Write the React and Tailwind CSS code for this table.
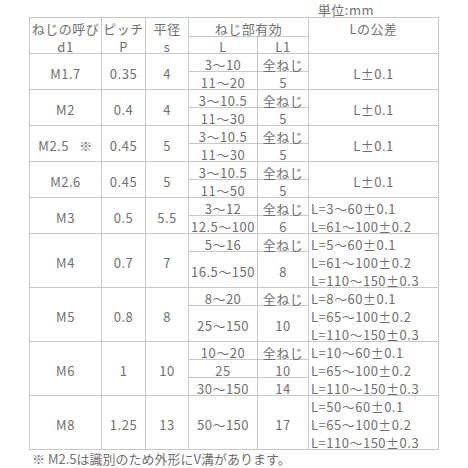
import React from "react";

const font = { fontFamily: '"Noto Sans CJK JP", "Liberation Sans", sans-serif' };

// 全セルの配置（グリッド上の位置はクラスで直書き）
const cells = [
  // ヘッダー
  { c: "col-start-1 row-start-1 row-span-2 flex-col", t: ["ねじの呼び", "d1"] },
  { c: "col-start-2 row-start-1 row-span-2 flex-col", t: ["ピッチ", "P"] },
  { c: "col-start-3 row-start-1 row-span-2 flex-col", t: ["平径", "s"] },
  { c: "col-start-4 col-span-2 row-start-1", t: "ねじ部有効" },
  { c: "col-start-4 row-start-2", t: "L" },
  { c: "col-start-5 row-start-2", t: "L1" },
  { c: "col-start-6 row-start-1 row-span-2 flex-col", t: ["Lの公差", "\u00a0"] },

  // M1.7
  { c: "col-start-1 row-start-3 row-span-2", t: "M1.7" },
  { c: "col-start-2 row-start-3 row-span-2", t: "0.35" },
  { c: "col-start-3 row-start-3 row-span-2", t: "4" },
  { c: "col-start-4 row-start-3", t: "3～10" },
  { c: "col-start-5 row-start-3", t: "全ねじ" },
  { c: "col-start-4 row-start-4", t: "11～20" },
  { c: "col-start-5 row-start-4", t: "5" },
  { c: "col-start-6 row-start-3 row-span-2", t: "L±0.1" },

  // M2
  { c: "col-start-1 row-start-5 row-span-2", t: "M2" },
  { c: "col-start-2 row-start-5 row-span-2", t: "0.4" },
  { c: "col-start-3 row-start-5 row-span-2", t: "4" },
  { c: "col-start-4 row-start-5", t: "3～10.5" },
  { c: "col-start-5 row-start-5", t: "全ねじ" },
  { c: "col-start-4 row-start-6", t: "11～30" },
  { c: "col-start-5 row-start-6", t: "5" },
  { c: "col-start-6 row-start-5 row-span-2", t: "L±0.1" },

  // M2.5
  { c: "col-start-1 row-start-7 row-span-2", t: "M2.5\u00a0\u00a0\u00a0※" },
  { c: "col-start-2 row-start-7 row-span-2", t: "0.45" },
  { c: "col-start-3 row-start-7 row-span-2", t: "5" },
  { c: "col-start-4 row-start-7", t: "3～10.5" },
  { c: "col-start-5 row-start-7", t: "全ねじ" },
  { c: "col-start-4 row-start-8", t: "11～30" },
  { c: "col-start-5 row-start-8", t: "5" },
  { c: "col-start-6 row-start-7 row-span-2", t: "L±0.1" },

  // M2.6
  { c: "col-start-1 row-start-9 row-span-2", t: "M2.6" },
  { c: "col-start-2 row-start-9 row-span-2", t: "0.45" },
  { c: "col-start-3 row-start-9 row-span-2", t: "5" },
  { c: "col-start-4 row-start-9", t: "3～10.5" },
  { c: "col-start-5 row-start-9", t: "全ねじ" },
  { c: "col-start-4 row-start-10", t: "11～50" },
  { c: "col-start-5 row-start-10", t: "5" },
  { c: "col-start-6 row-start-9 row-span-2", t: "L±0.1" },

  // M3
  { c: "col-start-1 row-start-11 row-span-2", t: "M3" },
  { c: "col-start-2 row-start-11 row-span-2", t: "0.5" },
  { c: "col-start-3 row-start-11 row-span-2", t: "5.5" },
  { c: "col-start-4 row-start-11", t: "3～12" },
  { c: "col-start-5 row-start-11", t: "全ねじ" },
  { c: "col-start-4 row-start-12", t: "12.5～100" },
  { c: "col-start-5 row-start-12", t: "6" },
  { c: "col-start-6 row-start-11 row-span-2 flex-col items-start pl-[2px]", t: ["L=3～60±0.1", "L=61～100±0.2"] },

  // M4
  { c: "col-start-1 row-start-13 row-span-3", t: "M4" },
  { c: "col-start-2 row-start-13 row-span-3", t: "0.7" },
  { c: "col-start-3 row-start-13 row-span-3", t: "7" },
  { c: "col-start-4 row-start-13", t: "5～16" },
  { c: "col-start-5 row-start-13", t: "全ねじ" },
  { c: "col-start-4 row-start-14 row-span-2", t: "16.5～150" },
  { c: "col-start-5 row-start-14 row-span-2", t: "8" },
  { c: "col-start-6 row-start-13 row-span-3 flex-col items-start pl-[2px]", t: ["L=5～60±0.1", "L=61～100±0.2", "L=110～150±0.3"] },

  // M5
  { c: "col-start-1 row-start-16 row-span-3", t: "M5" },
  { c: "col-start-2 row-start-16 row-span-3", t: "0.8" },
  { c: "col-start-3 row-start-16 row-span-3", t: "8" },
  { c: "col-start-4 row-start-16", t: "8～20" },
  { c: "col-start-5 row-start-16", t: "全ねじ" },
  { c: "col-start-4 row-start-17 row-span-2", t: "25～150" },
  { c: "col-start-5 row-start-17 row-span-2", t: "10" },
  { c: "col-start-6 row-start-16 row-span-3 flex-col items-start pl-[2px]", t: ["L=8～60±0.1", "L=65～100±0.2", "L=110～150±0.3"] },

  // M6
  { c: "col-start-1 row-start-19 row-span-3", t: "M6" },
  { c: "col-start-2 row-start-19 row-span-3", t: "1" },
  { c: "col-start-3 row-start-19 row-span-3", t: "10" },
  { c: "col-start-4 row-start-19", t: "10～20" },
  { c: "col-start-5 row-start-19", t: "全ねじ" },
  { c: "col-start-4 row-start-20", t: "25" },
  { c: "col-start-5 row-start-20", t: "10" },
  { c: "col-start-4 row-start-21", t: "30～150" },
  { c: "col-start-5 row-start-21", t: "14" },
  { c: "col-start-6 row-start-19 row-span-3 flex-col items-start pl-[2px]", t: ["L=10～60±0.1", "L=65～100±0.2", "L=110～150±0.3"] },

  // M8
  { c: "col-start-1 row-start-22 row-span-3", t: "M8" },
  { c: "col-start-2 row-start-22 row-span-3", t: "1.25" },
  { c: "col-start-3 row-start-22 row-span-3", t: "13" },
  { c: "col-start-4 row-start-22 row-span-3", t: "50～150" },
  { c: "col-start-5 row-start-22 row-span-3", t: "17" },
  { c: "col-start-6 row-start-22 row-span-3 flex-col items-start pl-[2px]", t: ["L=50～60±0.1", "L=65～100±0.2", "L=110～150±0.3"] },
];

export default function App() {
  return (
    <div className="w-[468px] h-[468px] bg-white text-[#707070] text-[13px]" style={font}>
      <div className="flex justify-end pr-[94px] leading-[17px] h-[17px] pt-[1px] tracking-[0.5px]">単位:mm</div>

      <div className="ml-[29px] w-[410px] grid grid-cols-[71px_43px_42px_68px_50px_129px] grid-rows-[18px_16px_repeat(22,17px)] gap-px p-px bg-[#c8c8c8] tracking-[0.5px]">
        {cells.map((cell, i) => (
          <div key={i} className={"bg-white flex items-center justify-center pt-[4px] leading-[18px] whitespace-nowrap " + cell.c}>
            {Array.isArray(cell.t)
              ? cell.t.map((line, j) => <div key={j}>{line}</div>)
              : cell.t}
          </div>
        ))}
      </div>

      <div className="pl-[3px] ml-[29px] leading-[16px] pt-[1px]">※ M2.5は識別のため外形にV溝があります。</div>
    </div>
  );
}
